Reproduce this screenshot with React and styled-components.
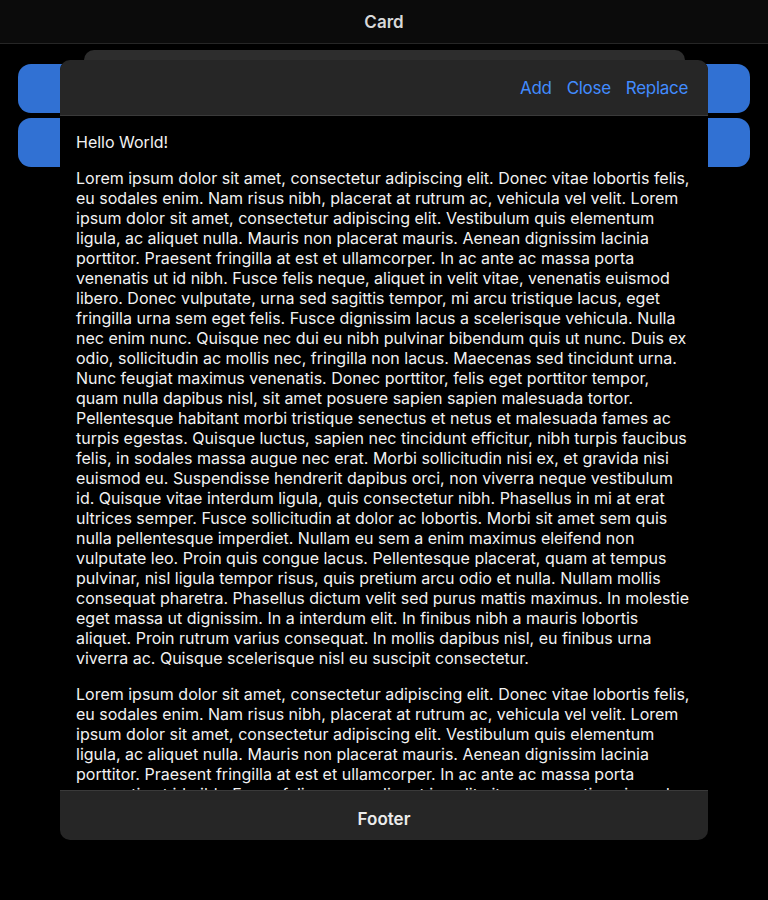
import React from "react";
import styled, { createGlobalStyle } from "styled-components";

const Global = createGlobalStyle`
  html, body { margin: 0; padding: 0; background: #000; }
  body { font-family: Inter, "Noto Sans", sans-serif; -webkit-font-smoothing: antialiased; }
  * { box-sizing: border-box; }
`;

const Page = styled.div`
  position: relative;
  width: 768px;
  height: 900px;
  background: #000;
  overflow: hidden;
`;

const TopBar = styled.header`
  height: 44px;
  background: #0b0b0b;
  border-bottom: 1px solid #262626;
  display: flex;
  align-items: center;
  justify-content: center;
`;

const Title = styled.h1`
  margin: 0;
  font-size: 17px;
  font-weight: 600;
  color: #d8d8d8;
`;

const PageContent = styled.main`
  padding: 20px 18px;
  display: flex;
  flex-direction: column;
  gap: 5px;
`;

const BlueButton = styled.button`
  height: 49px;
  border: none;
  border-radius: 13px;
  background: #3171d3;
  color: #fff;
  font: inherit;
`;

const BehindCard = styled.div`
  position: absolute;
  left: 84px;
  right: 83px;
  top: 50px;
  height: 60px;
  border-radius: 10px;
  background: #2d2d2d;
`;

const Modal = styled.section`
  position: absolute;
  left: 60px;
  top: 60px;
  width: 648px;
  height: 780px;
  border-radius: 10px;
  overflow: hidden;
  background: #000;
  display: flex;
  flex-direction: column;
`;

const ModalToolbar = styled.div`
  height: 56px;
  flex: none;
  background: #262626;
  border-bottom: 1px solid #3a3a3a;
  display: flex;
  align-items: center;
  justify-content: flex-end;
  padding: 0 20px 0 0;
  gap: 15px;
`;

const ToolbarButton = styled.button`
  border: none;
  background: none;
  padding: 0;
  color: #428cff;
  font-family: Inter, "Noto Sans", sans-serif;
  font-size: 17px;
  font-weight: 400;
  letter-spacing: -0.3px;
  cursor: pointer;
`;

const Content = styled.div`
  flex: 1;
  min-height: 0;
  overflow: hidden;
  padding: 16px 16px 0;
  color: #f2f2f2;
  font-size: 16px;
  line-height: 20px;
`;

const Para = styled.p`
  margin: 0 0 16px;
`;

const Footer = styled.footer`
  height: 50px;
  flex: none;
  background: #262626;
  border-top: 1px solid #3a3a3a;
  display: flex;
  align-items: center;
  justify-content: center;
  padding-top: 6px;
`;

const FooterTitle = styled.div`
  font-size: 17px;
  font-weight: 600;
  color: #ececec;
`;

const LOREM =
  "Lorem ipsum dolor sit amet, consectetur adipiscing elit. Donec vitae lobortis felis, eu sodales enim. Nam risus nibh, placerat at rutrum ac, vehicula vel velit. Lorem ipsum dolor sit amet, consectetur adipiscing elit. Vestibulum quis elementum ligula, ac aliquet nulla. Mauris non placerat mauris. Aenean dignissim lacinia porttitor. Praesent fringilla at est et ullamcorper. In ac ante ac massa porta venenatis ut id nibh. Fusce felis neque, aliquet in velit vitae, venenatis euismod libero. Donec vulputate, urna sed sagittis tempor, mi arcu tristique lacus, eget fringilla urna sem eget felis. Fusce dignissim lacus a scelerisque vehicula. Nulla nec enim nunc. Quisque nec dui eu nibh pulvinar bibendum quis ut nunc. Duis ex odio, sollicitudin ac mollis nec, fringilla non lacus. Maecenas sed tincidunt urna. Nunc feugiat maximus venenatis. Donec porttitor, felis eget porttitor tempor, quam nulla dapibus nisl, sit amet posuere sapien sapien malesuada tortor. Pellentesque habitant morbi tristique senectus et netus et malesuada fames ac turpis egestas. Quisque luctus, sapien nec tincidunt efficitur, nibh turpis faucibus felis, in sodales massa augue nec erat. Morbi sollicitudin nisi ex, et gravida nisi euismod eu. Suspendisse hendrerit dapibus orci, non viverra neque vestibulum id. Quisque vitae interdum ligula, quis consectetur nibh. Phasellus in mi at erat ultrices semper. Fusce sollicitudin at dolor ac lobortis. Morbi sit amet sem quis nulla pellentesque imperdiet. Nullam eu sem a enim maximus eleifend non vulputate leo. Proin quis congue lacus. Pellentesque placerat, quam at tempus pulvinar, nisl ligula tempor risus, quis pretium arcu odio et nulla. Nullam mollis consequat pharetra. Phasellus dictum velit sed purus mattis maximus. In molestie eget massa ut dignissim. In a interdum elit. In finibus nibh a mauris lobortis aliquet. Proin rutrum varius consequat. In mollis dapibus nisl, eu finibus urna viverra ac. Quisque scelerisque nisl eu suscipit consectetur.";

export default function App() {
  return (
    <Page>
      <Global />
      <TopBar>
        <Title>Card</Title>
      </TopBar>
      <PageContent>
        <BlueButton />
        <BlueButton />
      </PageContent>
      <BehindCard />
      <Modal>
        <ModalToolbar>
          <ToolbarButton>Add</ToolbarButton>
          <ToolbarButton>Close</ToolbarButton>
          <ToolbarButton>Replace</ToolbarButton>
        </ModalToolbar>
        <Content>
          <Para>Hello World!</Para>
          <Para>{LOREM}</Para>
          <Para>{LOREM}</Para>
        </Content>
        <Footer>
          <FooterTitle>Footer</FooterTitle>
        </Footer>
      </Modal>
    </Page>
  );
}
